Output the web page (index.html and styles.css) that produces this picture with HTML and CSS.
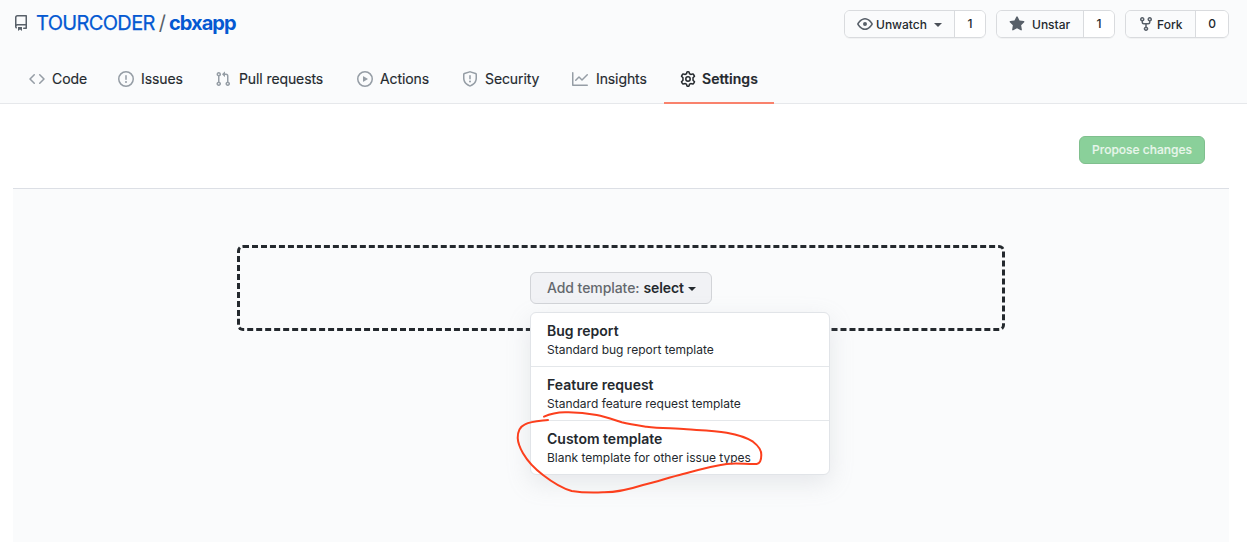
FILE: index.html
```
<!DOCTYPE html>
<html lang="en">
<head>
<meta charset="utf-8">
<title>TOURCODER/cbxapp settings</title>
<link rel="stylesheet" href="styles.css">
</head>
<body>
<header class="header">
  <div class="title-row">
    <svg class="icon repo-icon" viewBox="0 0 16 16"><path fill-rule="evenodd" d="M2 2.5A2.5 2.5 0 014.5 0h8.75a.75.75 0 01.75.75v12.5a.75.75 0 01-.75.75h-2.5a.75.75 0 110-1.5h1.75v-2h-8a1 1 0 00-.714 1.7.75.75 0 01-1.072 1.05A2.495 2.495 0 012 11.5v-9zm10.5-1V9h-8c-.356 0-.694.074-1 .208V2.5a1 1 0 011-1h8zM5 12.25v3.25a.25.25 0 00.4.2l1.45-1.087a.25.25 0 01.3 0L8.6 15.7a.25.25 0 00.4-.2v-3.25a.25.25 0 00-.25-.25h-3.5a.25.25 0 00-.25.25z"/></svg>
    <h1 class="repo-name"><a class="owner">TOURCODER</a><span class="slash">/</span><a class="repo">cbxapp</a></h1>
    <div class="actions">
      <div class="btn-group watch"><button class="btn"><svg class="icon" viewBox="0 0 16 16"><path fill-rule="evenodd" d="M1.679 7.932c.412-.621 1.242-1.75 2.366-2.717C5.175 4.242 6.527 3.5 8 3.5c1.473 0 2.824.742 3.955 1.715 1.124.967 1.954 2.096 2.366 2.717a.119.119 0 010 .136c-.412.621-1.242 1.75-2.366 2.717C10.825 11.758 9.473 12.5 8 12.5c-1.473 0-2.824-.742-3.955-1.715C2.92 9.818 2.09 8.69 1.679 8.068a.119.119 0 010-.136zM8 2c-1.981 0-3.67.992-4.933 2.078C1.797 5.169.88 6.423.43 7.1a1.619 1.619 0 000 1.798c.45.678 1.367 1.932 2.637 3.024C4.329 13.008 6.019 14 8 14c1.981 0 3.67-.992 4.933-2.078 1.27-1.091 2.187-2.345 2.637-3.023a1.619 1.619 0 000-1.798c-.45-.678-1.367-1.932-2.637-3.023C11.671 2.992 9.981 2 8 2zm0 8a2 2 0 100-4 2 2 0 000 4z"/></svg><span>Unwatch</span><i class="caret"></i></button><a class="count">1</a></div>
      <div class="btn-group star"><button class="btn"><svg class="icon" viewBox="0 0 16 16"><path fill-rule="evenodd" d="M8 .25a.75.75 0 01.673.418l1.882 3.815 4.21.612a.75.75 0 01.416 1.279l-3.046 2.97.719 4.192a.75.75 0 01-1.088.791L8 12.347l-3.766 1.98a.75.75 0 01-1.088-.79l.72-4.194L.818 6.374a.75.75 0 01.416-1.28l4.21-.611L7.327.668A.75.75 0 018 .25z"/></svg><span>Unstar</span></button><a class="count">1</a></div>
      <div class="btn-group fork"><button class="btn"><svg class="icon" viewBox="0 0 16 16"><path fill-rule="evenodd" d="M5 3.25a.75.75 0 11-1.5 0 .75.75 0 011.5 0zm0 2.122a2.25 2.25 0 10-1.5 0v.878A2.25 2.25 0 005.75 8.5h1.5v2.128a2.251 2.251 0 101.5 0V8.5h1.5a2.25 2.25 0 002.25-2.25v-.878a2.25 2.25 0 10-1.5 0v.878a.75.75 0 01-.75.75h-4.5A.75.75 0 015 6.25v-.878zm3.75 7.378a.75.75 0 11-1.5 0 .75.75 0 011.5 0zm3-8.75a.75.75 0 100-1.5.75.75 0 000 1.5z"/></svg><span>Fork</span></button><a class="count">0</a></div>
    </div>
  </div>
  <nav class="tabs">
    <a class="tab code"><svg class="icon" viewBox="0 0 16 16"><path fill-rule="evenodd" d="M4.72 3.22a.75.75 0 011.06 1.06L2.06 8l3.72 3.72a.75.75 0 11-1.06 1.06L.47 8.53a.75.75 0 010-1.06l4.25-4.25zm6.56 0a.75.75 0 10-1.06 1.06L13.94 8l-3.72 3.72a.75.75 0 101.06 1.06l4.25-4.25a.75.75 0 000-1.06l-4.25-4.25z"/></svg><span>Code</span></a>
    <a class="tab issues"><svg class="icon" viewBox="0 0 16 16"><path fill-rule="evenodd" d="M8 1.5a6.5 6.5 0 100 13 6.5 6.5 0 000-13zM0 8a8 8 0 1116 0A8 8 0 010 8zm9 3a1 1 0 11-2 0 1 1 0 012 0zm-.25-6.25a.75.75 0 00-1.5 0v3.5a.75.75 0 001.5 0v-3.5z"/></svg><span>Issues</span></a>
    <a class="tab pulls"><svg class="icon" viewBox="0 0 16 16"><path fill-rule="evenodd" d="M7.177 3.073L9.573.677A.25.25 0 0110 .854v4.792a.25.25 0 01-.427.177L7.177 3.427a.25.25 0 010-.354zM3.75 2.5a.75.75 0 100 1.5.75.75 0 000-1.5zm-2.25.75a2.25 2.25 0 113 2.122v5.256a2.251 2.251 0 11-1.5 0V5.372A2.25 2.25 0 011.5 3.25zM11 2.5h-1V4h1a1 1 0 011 1v5.628a2.251 2.251 0 101.5 0V5A2.5 2.5 0 0011 2.5zm1 10.25a.75.75 0 111.5 0 .75.75 0 01-1.5 0zM3.75 12a.75.75 0 100 1.5.75.75 0 000-1.5z"/></svg><span>Pull requests</span></a>
    <a class="tab runs"><svg class="icon" viewBox="0 0 16 16"><path fill-rule="evenodd" d="M1.5 8a6.5 6.5 0 1113 0 6.5 6.5 0 01-13 0zM8 0a8 8 0 100 16A8 8 0 008 0zM6.379 5.227A.25.25 0 006 5.442v5.117a.25.25 0 00.379.214l4.264-2.559a.25.25 0 000-.428L6.379 5.227z"/></svg><span>Actions</span></a>
    <a class="tab security"><svg class="icon" viewBox="0 0 16 16"><path fill-rule="evenodd" d="M7.467.133a1.75 1.75 0 011.066 0l5.25 1.68A1.75 1.75 0 0115 3.48V7c0 1.566-.32 3.182-1.303 4.682-.983 1.498-2.585 2.813-5.032 3.855a1.7 1.7 0 01-1.33 0c-2.447-1.042-4.049-2.357-5.032-3.855C1.32 10.182 1 8.566 1 7V3.48a1.75 1.75 0 011.217-1.667l5.25-1.68zm.61 1.429a.25.25 0 00-.153 0l-5.25 1.68a.25.25 0 00-.174.238V7c0 1.358.275 2.666 1.057 3.86.784 1.194 2.121 2.34 4.366 3.297a.2.2 0 00.154 0c2.245-.956 3.582-2.104 4.366-3.298C13.225 9.666 13.5 8.36 13.5 7V3.48a.25.25 0 00-.174-.237l-5.25-1.68zM9 10.5a1 1 0 11-2 0 1 1 0 012 0zm-.25-5.75a.75.75 0 10-1.5 0v3a.75.75 0 001.5 0v-3z"/></svg><span>Security</span></a>
    <a class="tab insights"><svg class="icon" viewBox="0 0 16 16"><path fill-rule="evenodd" d="M1.5 1.75a.75.75 0 00-1.5 0v12.5c0 .414.336.75.75.75h14.5a.75.75 0 000-1.5H1.5V1.75zm14.28 2.53a.75.75 0 00-1.06-1.06L10 7.94 7.53 5.47a.75.75 0 00-1.06 0L3.22 8.72a.75.75 0 001.06 1.06L7 7.06l2.47 2.47a.75.75 0 001.06 0l5.25-5.25z"/></svg><span>Insights</span></a>
    <a class="tab settings selected"><svg class="icon gear" viewBox="0 0 16 16"><path stroke-width="1.5" stroke-linejoin="round" d="M7 .9 Q8 .6 9 .9 L9.5 2.8 Q10.2 3.1 10.8 3.5 L12.9 2.9 Q14 3.9 14.5 5.3 L13 6.8 Q13.1 8 13 9.2 L14.5 10.7 Q14 12.1 12.9 13.1 L10.8 12.5 Q10.2 12.9 9.5 13.2 L9 15.1 Q8 15.4 7 15.1 L6.5 13.2 Q5.8 12.9 5.2 12.5 L3.1 13.1 Q2 12.1 1.5 10.7 L3 9.2 Q2.9 8 3 6.8 L1.5 5.3 Q2 3.9 3.1 2.9 L5.2 3.5 Q5.8 3.1 6.5 2.8Z"/><circle cx="8" cy="8" r="2.2" stroke-width="1.5"/></svg><span>Settings</span></a>
  </nav>
</header>
<main class="main">
  <div class="toolbar"><button class="propose"><span>Propose changes</span></button></div>
  <section class="canvas">
    <div class="dropzone">
      <div class="select-wrap">
        <button class="select"><span class="prefix">Add template:</span><span class="value">select</span><i class="caret"></i></button>
        <div class="menu">
          <a class="item"><strong>Bug report</strong><span>Standard bug report template</span></a>
          <a class="item"><strong>Feature request</strong><span>Standard feature request template</span></a>
          <a class="item"><strong>Custom template</strong><span>Blank template for other issue types</span></a>
        </div>
      </div>
    </div>
  </section>
</main>
<svg class="scribble" viewBox="0 0 260 90"><path d="M33 8.700 C40 5.500 47 4.400 54 4.300 C65 4 75 5 85.700 7 C94 8.500 102 11.500 110.700 14.300 C119 16.500 127 17.500 135.700 18.700 C149 20.300 162 20.200 175.700 21.300 C189 22.200 203 22.500 215.700 24.700 C226 26.500 235 29 242 33.700 C247 37.500 250.500 42 250.300 47 C250.300 52 249 55.500 245.700 56 C236 56.500 226 54.500 215.700 56 C201 58 187 62 172 66 C158 69.500 145 74 132 77 C118 81.500 105 84.500 92 84.300 C81 84.800 70 84.500 60.700 83 C50 80 41 74 32 67 C24 61 17 54 12 45.300 C9 40 7 36 6.700 30 C6.700 24 9 18.500 14 16.300 C20 13.300 29 13 37 12"/></svg>
</body>
</html>
```

FILE: styles.css
```
* { box-sizing: border-box; }
body {
  margin: 0;
  height: 542px;
  overflow: hidden;
  background: #fff;
  color: #24292e;
  font-family: Inter, "Liberation Sans", sans-serif;
  font-size: 14px;
}
button { font: inherit; color: inherit; }
span, strong { white-space: nowrap; }
.icon { width: 16px; height: 16px; flex: none; fill: currentColor; }
.caret {
  width: 0;
  height: 0;
  border: 4px solid transparent;
  border-top-color: currentColor;
  border-bottom: 0;
}

.header { height: 104px; background: #fafbfc; border-bottom: 1px solid #e6e8eb; }
.title-row { display: flex; height: 55px; padding: 9px 18px 0 13px; align-items: flex-start; }
.repo-icon { margin-top: 6px; color: #586069; }
.repo-name {
  display: flex;
  margin: 0 0 0 7px;
  font-size: 20px;
  line-height: 28px;
  font-weight: 400;
}
.owner, .repo { color: #0559d2; }
.owner { letter-spacing: -0.65px; -webkit-text-stroke: .25px; }
.slash { margin: 0 3px 0 4px; color: #586069; }
.repo { font-weight: 700; letter-spacing: -0.95px; }

.actions { display: flex; gap: 10px; margin: 1px 0 0 auto; }
.btn-group {
  display: flex;
  height: 28px;
  border: 1px solid #d9dbde;
  border-radius: 6px;
  overflow: hidden;
  box-shadow: 0 1px 0 rgba(27, 31, 35, .04);
  font-size: 12px;
  font-weight: 500;
}
.btn {
  display: flex;
  flex: 1;
  align-items: center;
  padding: 0 0 0 12px;
  border: 0;
  background: #fafbfc;
}
.btn .icon { color: #586069; }
.btn .caret { margin-left: 7px; margin-top: 2px; color: #4b5158; }
.count {
  width: 31px;
  border-left: 1px solid #d9dbde;
  background: #fff;
  text-align: center;
  line-height: 26px;
}
.watch { width: 142px; }
.watch .btn span { margin-left: 3px; }
.star { width: 119px; }
.star .btn span { margin-left: 7px; }
.fork { width: 104px; }
.fork .btn span { margin-left: 3px; }
.fork .count { width: 33px; }

.tabs { display: flex; height: 49px; padding-left: 13px; }
.tab {
  display: flex;
  gap: 7px;
  height: 49px;
  padding: 0 0 1px 16px;
  align-items: center;
}
.tab .icon { color: #959da5; }
.tab span { margin-top: -1px; letter-spacing: -0.1px; -webkit-text-stroke: .15px; }
.code { width: 89px; }
.issues { width: 97px; }
.pulls { width: 142px; gap: 8px; }
.runs { width: 105px; }
.security { width: 110px; }
.insights { width: 108px; gap: 8px; }
.settings { width: 110px; gap: 6px; }
.tab.selected { font-weight: 600; border-bottom: 2px solid #f9826c; padding-bottom: 0; }
.tab.selected span { margin-top: 0; letter-spacing: .05px; }
.tab.selected .gear { color: #24292e; fill: none; stroke: currentColor; }

.main { padding: 0 18px 0 13px; }
.toolbar { display: flex; height: 84px; padding: 32px 24px 0 0; justify-content: flex-end; }
.propose {
  width: 126px;
  height: 28px;
  padding: 0 0 2px;
  border: 1px solid #80bf8e;
  border-radius: 6px;
  background: #8ad09a;
  color: #e8f6eb;
  font-size: 12px;
  font-weight: 500;
  -webkit-text-stroke: .15px;
}
.canvas { height: 354px; padding: 56px 224px 0; background: #fafbfc; border-top: 1px solid #dcdfe5; }
.dropzone {
  display: flex;
  justify-content: center;
  height: 86px;
  padding-top: 24px;
  border: 3px dashed #24292e;
  border-radius: 6px;
}
.select-wrap { position: relative; width: 182px; height: 32px; }
.select {
  display: flex;
  align-items: center;
  width: 182px;
  height: 32px;
  padding: 0 0 2px 16px;
  border: 1px solid #d2d4d8;
  border-radius: 6px;
  background: #f1f2f5;
  font-weight: 500;
}
.prefix { color: #64686d; margin-right: 4px; letter-spacing: -0.07px; }
.value { font-weight: 600; letter-spacing: -0.1px; }
.select .caret { margin: 4px 0 0 4px; }
.menu {
  position: absolute;
  top: 40px;
  left: 0;
  width: 300px;
  border: 1px solid #e1e4e8;
  border-radius: 6px;
  background: #fff;
  box-shadow: 0 8px 24px rgba(149, 157, 165, .2);
}
.item {
  display: flex;
  flex-direction: column;
  height: 54px;
  padding: 8px 16px 0;
  border-bottom: 1px solid #e4e7ea;
}
.item:last-child { height: 53px; border-bottom: 0; }
.item strong { font-weight: 600; line-height: 20px; }
.item span { font-size: 12px; line-height: 18px; }
.scribble {
  position: absolute;
  left: 511px;
  top: 408px;
  width: 260px;
  height: 90px;
  fill: none;
  stroke: #fc3f1d;
  stroke-width: 2;
  stroke-linecap: round;
}
```
